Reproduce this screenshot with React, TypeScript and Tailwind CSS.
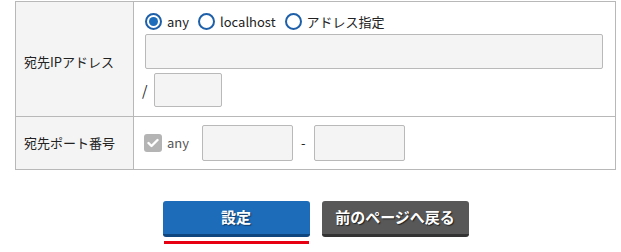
import React from 'react';

const font = "font-['Meiryo','Noto_Sans_CJK_JP','Noto_Sans',sans-serif]";

const Radio: React.FC<{ checked?: boolean; label: string }> = ({ checked, label }) => (
  <label className="flex items-center gap-[5px] mr-[9px]">
    <span className="w-[17px] h-[17px] rounded-full border-[2px] border-[#1d5fa8] bg-white flex items-center justify-center">
      {checked && <span className="w-[9px] h-[9px] rounded-full bg-[#1d6bbb]" />}
    </span>
    <span className="text-[13px] text-[#222] leading-none">{label}</span>
  </label>
);

const Field: React.FC<{ className: string }> = ({ className }) => (
  <div className={`bg-[#f4f4f4] border border-[#b9b9b9] rounded-[2px] ${className}`} />
);

export default function App() {
  return (
    <div className={`w-[621px] h-[252px] bg-white ${font}`}>
      <div className="pt-px pl-[15px] w-[616px]">
        <table className="w-[601px] border-collapse">
          <tbody>
            <tr className="h-[115px]">
              <th className="w-[118px] bg-[#f4f4f4] border border-[#b8b8b8] text-left font-normal text-[13px] text-[#222] pl-[8px] pt-[5px]">
                宛先IPアドレス
              </th>
              <td className="border border-[#b8b8b8] pl-[11px] pr-[11px] pt-[9px] pb-[8px] align-top">
                <div className="flex items-center h-[20px]">
                  <Radio checked label="any" />
                  <Radio label="localhost" />
                  <Radio label="アドレス指定" />
                </div>
                <Field className="mt-[3px] h-[35px] w-[458px]" />
                <div className="flex items-center mt-[4px]">
                  <span className="text-[14px] text-[#222] w-[9px] -ml-[3px]">/</span>
                  <Field className="ml-[3px] h-[34px] w-[68px]" />
                </div>
              </td>
            </tr>
            <tr className="h-[53px]">
              <th className="bg-[#f4f4f4] border border-[#b8b8b8] text-left font-normal text-[13px] text-[#222] pl-[8px]">
                宛先ポート番号
              </th>
              <td className="border border-[#b8b8b8] pl-[10px]">
                <div className="flex items-center">
                  <span className="w-[18px] h-[18px] rounded-[3px] bg-[#b4b4b4] flex items-center justify-center">
                    <svg width="12" height="10" viewBox="0 0 12 10">
                      <path d="M1.5 5 L4.5 8 L10.5 2" stroke="white" strokeWidth="2.4" fill="none" strokeLinecap="round" strokeLinejoin="round" />
                    </svg>
                  </span>
                  <span className="ml-[5px] text-[13px] text-[#555]">any</span>
                  <Field className="ml-[13px] h-[36px] w-[91px]" />
                  <span className="mx-[8px] text-[13px] text-[#222]">-</span>
                  <Field className="h-[36px] w-[91px]" />
                </div>
              </td>
            </tr>
          </tbody>
        </table>
        <div className="flex justify-center gap-[12px] mt-[31px]">
          <div className="flex flex-col items-center">
            <button className="w-[147px] h-[36px] rounded-[3px] bg-[#1c6cb9] border-b-[3px] border-[#0f4680] text-white font-bold text-[15px] [text-shadow:1px_1px_1px_#123b66]">
              設定
            </button>
            <div className="mt-[4px] h-[3px] w-[145px] bg-[#e60012]" />
          </div>
          <button className="w-[147px] h-[36px] rounded-[3px] bg-[#585858] border-b-[3px] border-[#333] text-white font-bold text-[15px] [text-shadow:1px_1px_1px_#222]">
            前のページへ戻る
          </button>
        </div>
      </div>
    </div>
  );
}
